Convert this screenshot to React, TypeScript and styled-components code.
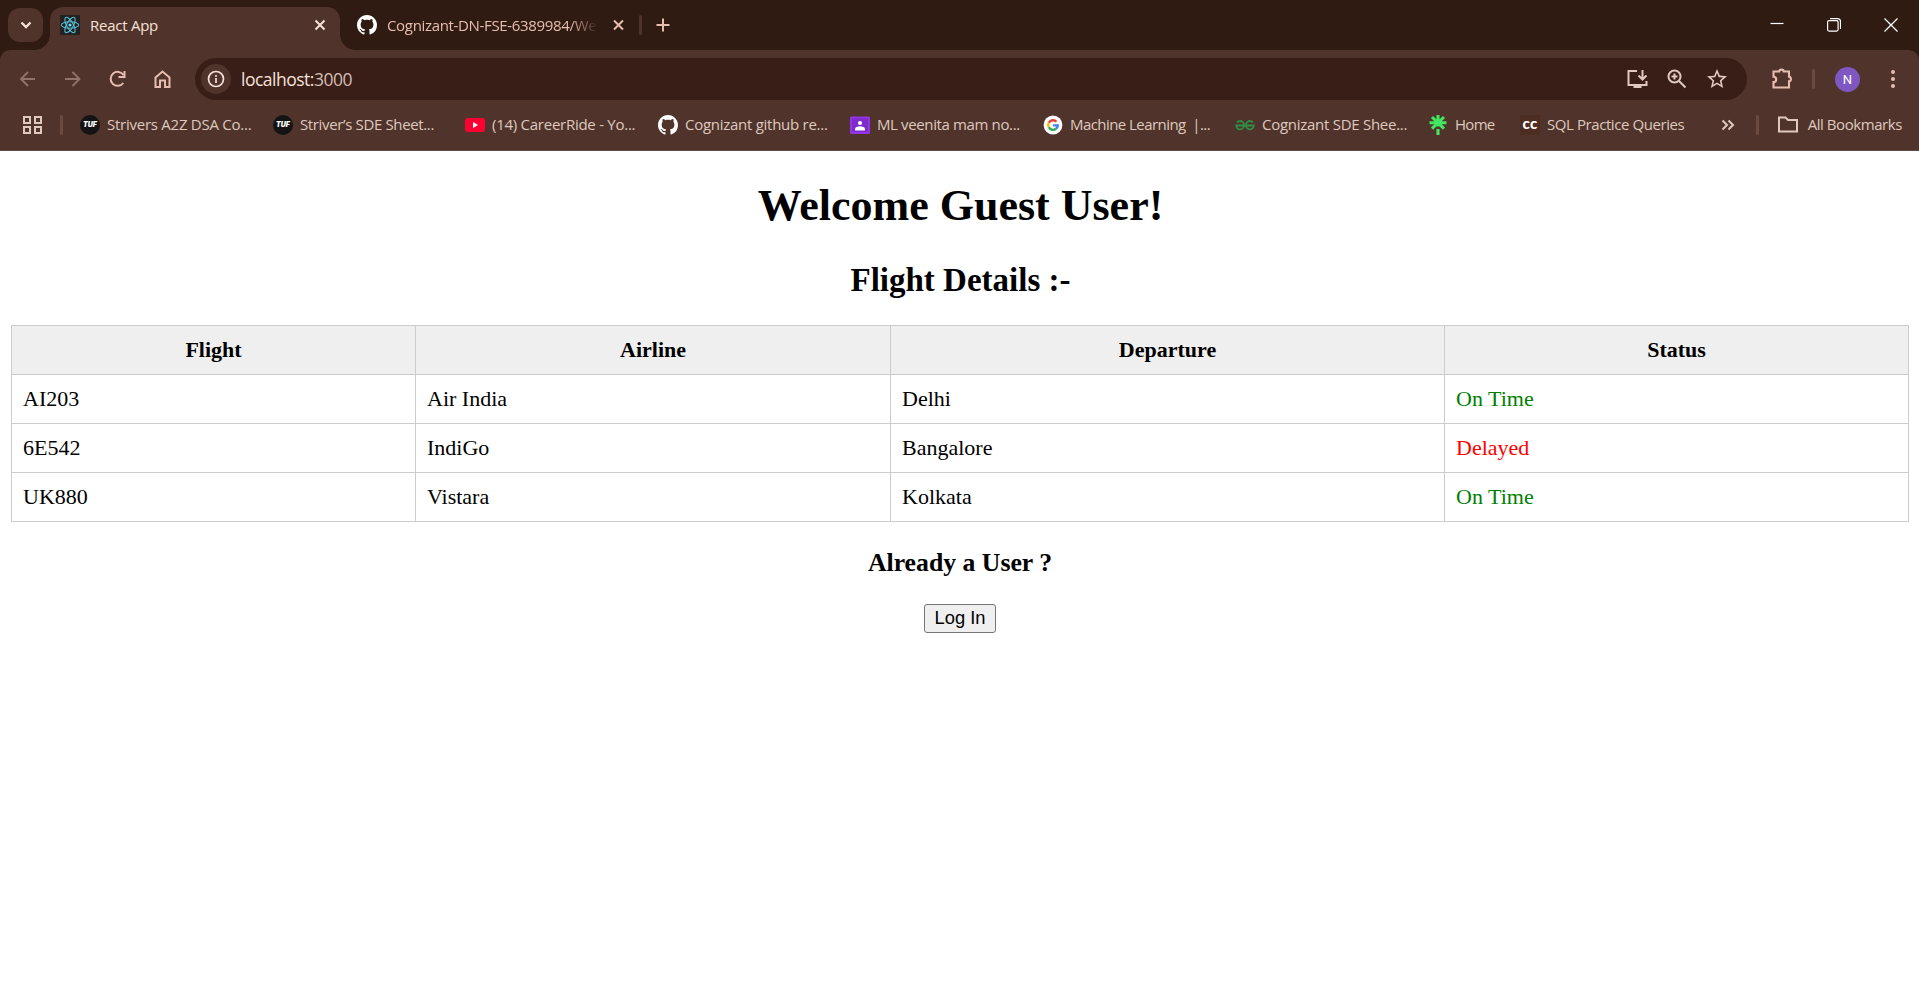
import React from 'react';
import styled, { createGlobalStyle } from 'styled-components';

const UI = '"Open Sans", "Noto Sans", sans-serif';

const GlobalStyle = createGlobalStyle`
  html, body { margin: 0; padding: 0; background: #fff; overflow: hidden; }
  svg { display: block; flex: none; }
`;

const Window = styled.div`
  display: flex;
  flex-direction: column;
  height: 1007px;
  background: #fff;
`;

/* ---------- tab strip ---------- */
const Frame = styled.header`
  background: #301b12;
  font-family: ${UI};
  font-size: 15px;
`;
const TabStrip = styled.div`
  display: flex;
  height: 50px;
  box-sizing: border-box;
  padding-left: 8px;
`;
const TabSearch = styled.button`
  width: 35px;
  height: 34px;
  margin: 8px 7px 0 0;
  padding: 0;
  border: 0;
  border-radius: 12px;
  background: #50342b;
  display: grid;
  place-items: center;
`;
const ActiveTab = styled.div`
  position: relative;
  display: flex;
  align-items: center;
  width: 290px;
  height: 43px;
  margin-top: 7px;
  box-sizing: border-box;
  padding: 0 8px 7px 10px;
  border-radius: 13px 13px 0 0;
  background: #50342b;
  color: #f6e1da;
  &::before, &::after {
    content: '';
    position: absolute;
    bottom: 0;
    width: 15px;
    height: 15px;
  }
  &::before { left: -15px; background: radial-gradient(circle at 0 0, transparent 14.5px, #50342b 15px); }
  &::after { right: -15px; background: radial-gradient(circle at 100% 0, transparent 14.5px, #50342b 15px); }
`;
const IdleTab = styled.div`
  display: flex;
  align-items: center;
  width: 286px;
  height: 50px;
  box-sizing: border-box;
  padding-left: 17px;
  color: #e7bdb0;
`;
const TabTitle = styled.span<{ $width: number; $spacing: number; $fade?: boolean }>`
  width: ${p => p.$width}px;
  margin-left: 10px;
  white-space: nowrap;
  line-height: 20px;
  letter-spacing: ${p => p.$spacing}px;
  ${p => p.$fade && 'mask-image: linear-gradient(90deg, #000 87%, transparent 101%);'}
`;
const Divider = styled.i<{ $gap?: string; $color?: string }>`
  flex: none;
  align-self: center;
  width: 3px;
  height: 20px;
  margin: ${p => p.$gap ?? '0'};
  border-radius: 2px;
  background: ${p => p.$color ?? '#6b4a40'};
`;
const NewTab = styled.span`
  display: flex;
  align-items: center;
`;
const WindowControls = styled.div`
  display: flex;
  gap: 43px;
  align-items: center;
  margin-left: auto;
  padding-right: 21px;
`;

/* ---------- toolbar ---------- */
const Toolbar = styled.div`
  display: flex;
  align-items: center;
  height: 58px;
  box-sizing: border-box;
  padding: 0 16px;
  background: #50342b;
  border-radius: 10px 10px 0 0;
`;
const NavButtons = styled.div`
  display: flex;
  gap: 21px;
  margin-right: 20px;
`;
const Omnibox = styled.div`
  flex: 1;
  display: flex;
  align-items: center;
  height: 42px;
  box-sizing: border-box;
  padding: 0 18px 0 6px;
  border-radius: 21px;
  background: #381e16;
`;
const SiteInfo = styled.span`
  display: grid;
  place-items: center;
  width: 30px;
  height: 30px;
  border-radius: 50%;
  background: #50342b;
`;
const Address = styled.span`
  flex: 1;
  margin-left: 10px;
  font-size: 17.5px;
  line-height: 24px;
  letter-spacing: -0.5px;
  color: #f6e1da;
`;
const Port = styled.span`
  color: #d3bcb4;
`;
const OmniActions = styled.div`
  display: flex;
  gap: 16px;
`;
const Extensions = styled.span`
  margin-left: 23px;
`;
const Avatar = styled.span`
  display: grid;
  place-items: center;
  width: 25px;
  height: 25px;
  margin-right: 23px;
  border-radius: 50%;
  background: #7e57c2;
  color: #fff;
  font-size: 13px;
  font-family: Roboto, sans-serif;
`;

/* ---------- bookmarks ---------- */
const BookmarkBar = styled.nav`
  display: flex;
  align-items: center;
  height: 43px;
  box-sizing: border-box;
  padding: 0 17px 9px 21px;
  background: #50342b;
  border-bottom: 1px solid #5d4b47;
  color: #dfc8bf;
`;
const Bookmark = styled.a<{ $width: number }>`
  display: flex;
  flex: none;
  align-items: center;
  gap: 7px;
  height: 20px;
  width: ${p => p.$width}px;
`;
const Label = styled.span<{ $spacing: number }>`
  padding-bottom: 2px;
  line-height: 20px;
  white-space: pre;
  letter-spacing: ${p => p.$spacing}px;
`;
const TufBadge = styled.span`
  display: grid;
  place-items: center;
  width: 20px;
  height: 20px;
  border-radius: 50%;
  background: #141414;
  color: #fff;
  font: italic 900 7px/20px Inter, sans-serif;
`;
const CcBadge = styled.span`
  display: grid;
  justify-items: center;
  align-items: start;
  width: 20px;
  height: 20px;
  background: #4c2d1f;
  color: #fff;
  font: 900 15px/16px Lato, sans-serif;
  letter-spacing: 0.3px;
`;
const AllBookmarks = styled.a`
  display: flex;
  align-items: center;
  height: 20px;
  margin-left: auto;
`;

/* ---------- page ---------- */
const Page = styled.main`
  flex: 1;
  padding: 0 11px;
  font-family: "Liberation Serif", "Times New Roman", serif;
  font-size: 22px;
  color: #000;
  text-align: center;
`;
const Welcome = styled.h1`
  margin: 30px 0;
  padding-left: 2px;
  font-size: 44px;
  line-height: 50px;
`;
const Subtitle = styled.h2`
  margin: 0 0 26px;
  padding-left: 2px;
  font-size: 33px;
  line-height: 38px;
`;
const Flights = styled.table`
  width: 100%;
  table-layout: fixed;
  border-collapse: collapse;
  text-align: left;
`;
const Cell = styled.td<{ $color?: string }>`
  height: 49px;
  box-sizing: border-box;
  padding: 0 11px;
  border: 1px solid #ccc;
  line-height: 26px;
  color: ${p => p.$color ?? '#000'};
`;
const HeadCell = styled.th<{ $width: number }>`
  width: ${p => p.$width}px;
  height: 49px;
  box-sizing: border-box;
  padding: 0 11px;
  border: 1px solid #ccc;
  background: #efefef;
  line-height: 26px;
  text-align: center;
`;
const Prompt = styled.h3`
  margin: 26px 0;
  padding-left: 1px;
  font-size: 25.74px;
  line-height: 30px;
`;
const LoginButton = styled.button`
  width: 72px;
  height: 29px;
  padding: 0 0 2px 1px;
  border: 1px solid #767676;
  border-radius: 3px;
  background: #efefef;
  color: #000;
  font: 18.33px/25px "Liberation Sans", Arial, sans-serif;
`;

/* ---------- icons ---------- */
type IconProps = { d: string; size?: number; w?: number; color?: string };
const Stroke = ({ d, size = 24, w = 2, color = '#e7bdb0' }: IconProps) => (
  <svg width={size} height={size} viewBox={`0 0 ${size} ${size}`} fill="none" stroke={color} strokeWidth={w}>
    <path d={d} />
  </svg>
);
const Material = ({ d, size = 24, color = '#dfc8bf' }: IconProps) => (
  <svg width={size} height={size} viewBox="0 0 24 24" fill={color}><path d={d} /></svg>
);
const GitHubMark = () => (
  <svg width="20" height="20" viewBox="0 0 16 16" fill="#fff">
    <path d="M8 0C3.58 0 0 3.58 0 8c0 3.54 2.29 6.53 5.47 7.59.4.07.55-.17.55-.38 0-.19-.01-.82-.01-1.49-2.01.37-2.53-.49-2.69-.94-.09-.23-.48-.94-.82-1.13-.28-.15-.68-.52-.01-.53.63-.01 1.08.58 1.23.82.72 1.21 1.87.87 2.33.66.07-.52.28-.87.51-1.07-1.78-.2-3.64-.89-3.64-3.95 0-.87.31-1.59.82-2.15-.08-.2-.36-1.02.08-2.12 0 0 .67-.21 2.2.82.64-.18 1.32-.27 2-.27s1.36.09 2 .27c1.53-1.04 2.2-.82 2.2-.82.44 1.1.16 1.92.08 2.12.51.56.82 1.27.82 2.15 0 3.07-1.87 3.75-3.65 3.95.29.25.54.73.54 1.48 0 1.07-.01 1.93-.01 2.2 0 .21.15.46.55.38A8.01 8.01 0 0 0 16 8c0-4.42-3.58-8-8-8z" />
  </svg>
);
const ReactLogo = () => (
  <svg width="20" height="20" viewBox="0 0 20 20" fill="none" stroke="#57b9d1" strokeWidth="1.1">
    <rect width="20" height="20" rx="1" fill="#222" stroke="none" />
    <ellipse cx="10" cy="10" rx="8.7" ry="3.3" />
    <ellipse cx="10" cy="10" rx="8.7" ry="3.3" transform="rotate(60 10 10)" />
    <ellipse cx="10" cy="10" rx="8.7" ry="3.3" transform="rotate(120 10 10)" />
    <circle cx="10" cy="10" r="1.6" fill="#61dafb" stroke="none" />
  </svg>
);
const YouTube = () => (
  <svg width="20" height="20" viewBox="0 0 20 20">
    <rect y="3" width="20" height="14" rx="3" fill="#ff0033" />
    <path d="M8 7l5 3-5 3z" fill="#fff" />
  </svg>
);
const Classroom = () => (
  <svg width="20" height="20" viewBox="0 0 20 20">
    <rect y="1.5" width="20" height="17.5" rx="1.5" fill="#9334e6" />
    <rect x="2" y="3.5" width="16" height="13.5" fill="#7f2bcb" />
    <circle cx="10" cy="8" r="2.1" fill="#fff" />
    <path d="M5 15.5v-1.4c0-1.8 2.6-2.8 5-2.8s5 1 5 2.8v1.4z" fill="#fff" />
  </svg>
);
const Google = () => (
  <svg width="20" height="20" viewBox="0 0 20 20" fill="none" strokeWidth="2.4">
    <circle cx="10" cy="10" r="9.4" fill="#fff" />
    <path d="M13.5 6.7A4.8 4.8 0 0 0 5.8 7.7" stroke="#ea4335" />
    <path d="M5.8 7.7a4.8 4.8 0 0 0 0 4.6" stroke="#fbbc04" />
    <path d="M5.8 12.3a4.8 4.8 0 0 0 7.2 1.5" stroke="#34a853" />
    <path d="M13 13.8a4.8 4.8 0 0 0 1.8-3.4H10" stroke="#4285f4" />
  </svg>
);
const Geeks = () => (
  <svg width="20" height="20" viewBox="0 0 20 20" fill="none" stroke="#2f8d46" strokeWidth="1.8">
    <path d="M2 7.300C3 6.300 4 6 5 6a3.900 4.200 0 1 1-3.800 4.500H18.800A3.900 4.200 0 1 1 15 6c1 0 2 .3 3 1.300" />
  </svg>
);
const Linktree = () => (
  <svg width="20" height="20" viewBox="0 0 20 20" stroke="#43e660" strokeWidth="3.1">
    <path d="M10 0v11.500M1.500 7.800h17M4 2l12 11.600M16 2L4 13.600M10 14v6" />
  </svg>
);

const bookmarks = [
  { icon: <TufBadge>TUF</TufBadge>, label: 'Strivers A2Z DSA Co...', width: 193, spacing: -0.25 },
  { icon: <TufBadge>TUF</TufBadge>, label: 'Striver’s SDE Sheet...', width: 192, spacing: -0.36 },
  { icon: <YouTube />, label: '(14) CareerRide - Yo...', width: 193, spacing: -0.26 },
  { icon: <GitHubMark />, label: 'Cognizant github re...', width: 192, spacing: -0.27 },
  { icon: <Classroom />, label: 'ML veenita mam no...', width: 193, spacing: -0.37 },
  { icon: <Google />, label: 'Machine Learning  |...', width: 192, spacing: -0.56 },
  { icon: <Geeks />, label: 'Cognizant SDE Shee...', width: 193, spacing: -0.27 },
  { icon: <Linktree />, label: 'Home', width: 92, spacing: -0.7 },
  { icon: <CcBadge>cc</CcBadge>, label: 'SQL Practice Queries', width: 170, spacing: -0.42 },
];

const columns = [
  { title: 'Flight', width: 404 },
  { title: 'Airline', width: 475 },
  { title: 'Departure', width: 554 },
  { title: 'Status', width: 464 },
];
const flights = [
  { code: 'AI203', airline: 'Air India', from: 'Delhi', status: 'On Time' },
  { code: '6E542', airline: 'IndiGo', from: 'Bangalore', status: 'Delayed' },
  { code: 'UK880', airline: 'Vistara', from: 'Kolkata', status: 'On Time' },
];

function BrowserChrome() {
  return (
    <Frame>
      <TabStrip>
        <TabSearch><Stroke size={14} w={2.3} color="#f6e1da" d="M2.5 4.500l4.500 4.500 4.500-4.500" /></TabSearch>
        <ActiveTab>
          <ReactLogo />
          <TabTitle $width={218} $spacing={-0.25}>React App</TabTitle>
          <Stroke size={24} color="#f6e1da" d="M7.500 7.500l9 9M16.500 7.500l-9 9" />
        </ActiveTab>
        <IdleTab>
          <GitHubMark />
          <TabTitle $width={210} $spacing={-0.33} $fade>Cognizant-DN-FSE-6389984/We</TabTitle>
          <Stroke size={36} d="M18 13.500l9 9M27 13.500l-9 9" />
        </IdleTab>
        <Divider $gap="0 8px 0 13px" $color="#50342b" />
        <NewTab><Stroke size={26} d="M13 6.500v13M6.500 13h13" /></NewTab>
        <WindowControls>
          <Stroke size={14} w={1.2} color="#fff" d="M.5 5.500h13" />
          <svg width="14" height="14" viewBox="0 0 14 14" fill="none" stroke="#fff" strokeWidth="1.2">
            <rect x=".6" y="2.6" width="10.5" height="10.5" rx="1.5" />
            <path d="M3 .6h7.500a3 3 0 0 1 3 3V11" />
          </svg>
          <Stroke size={14} w={1.3} color="#fff" d="M.5.5l13 13M13.5.5l-13 13" />
        </WindowControls>
      </TabStrip>
      <Toolbar>
        <NavButtons>
          <Stroke color="#92736a" w={1.8} d="M19 12H5.500M12 5l-7 7 7 7" />
          <Stroke color="#92736a" w={1.8} d="M4 12h14M11.500 5l7 7-7 7" />
          <Stroke d="M17.300 16A7 7 0 1 1 17.500 8M18.500 4v6h-6" />
          <Stroke d="M4.500 10.500L11.500 4.500l7 6V20h-4.500v-6.500h-5V20H4.500z" />
        </NavButtons>
        <Omnibox>
          <SiteInfo>
            <svg width="18" height="18" viewBox="0 0 18 18" fill="none" stroke="#f6e1da" strokeWidth="1.7">
              <circle cx="9" cy="9" r="7.5" /><path d="M9 8v5M9 5v1.700" />
            </svg>
          </SiteInfo>
          <Address>localhost:<Port>3000</Port></Address>
          <OmniActions>
            <Stroke color="#dfc8bf" d="M12 4H3.500V18H21.500V14M8.500 20h8M17.500 3v9M13.500 8.500l4 4 4-4" />
            <svg width="24" height="24" viewBox="0 0 24 24" fill="none" stroke="#dfc8bf" strokeWidth="2">
              <circle cx="9.5" cy="9.5" r="6" /><path d="M14 14l6.500 6.500M9.500 6.500v6M6.500 9.500h6" />
            </svg>
            <Material d="M22 9.240l-7.190-.62L12 2 9.190 8.630 2 9.240l5.460 4.730L5.820 21 12 17.270 18.180 21l-1.630-7.030L22 9.240zM12 15.400l-3.760 2.270 1-4.280-3.320-2.880 4.380-.38L12 6.100l1.710 4.040 4.380.38-3.320 2.880 1 4.280L12 15.400z" />
          </OmniActions>
        </Omnibox>
        <Extensions>
          <Stroke w={2.1} d="M3.500 4.500h5.700a2.300 1.900 0 0 1 4.600 0H19V9.800a1.900 2.300 0 0 1 0 4.600V20.500H3.500V15a2.700 2.600 0 0 0 0-5.200z" />
        </Extensions>
        <Divider $gap="0 20px 0 18px" />
        <Avatar>N</Avatar>
        <svg width="20" height="22" viewBox="0 0 20 22" fill="#e7bdb0">
          <circle cx="10" cy="4" r="2" /><circle cx="10" cy="11" r="2" /><circle cx="10" cy="18" r="2" />
        </svg>
      </Toolbar>
      <BookmarkBar>
        <Stroke size={22} color="#dfc8bf" d="M3 3h6v6H3zM14 3h6v6h-6zM3 13h6v6H3zM14 13h6v6h-6z" />
        <Divider $gap="0 17px" />
        {bookmarks.map(b => (
          <Bookmark key={b.label} $width={b.width}>
            {b.icon}
            <Label $spacing={b.spacing}>{b.label}</Label>
          </Bookmark>
        ))}
        <AllBookmarks>
          <Stroke size={14} color="#dfc8bf" d="M1.500 2.500l4.500 4.500-4.500 4.500M7.500 2.500l4.500 4.500-4.500 4.500" />
          <Divider $gap="0 18px 0 21px" />
          <Stroke size={31} color="#dfc8bf" d="M2 8.500h6.500l2.500 2.500h9V22.500H2z" />
          <Label $spacing={-0.43}>All Bookmarks</Label>
        </AllBookmarks>
      </BookmarkBar>
    </Frame>
  );
}

function FlightTable() {
  return (
    <Flights>
      <thead>
        <tr>{columns.map(c => <HeadCell key={c.title} $width={c.width}>{c.title}</HeadCell>)}</tr>
      </thead>
      <tbody>
        {flights.map(f => (
          <tr key={f.code}>
            <Cell>{f.code}</Cell>
            <Cell>{f.airline}</Cell>
            <Cell>{f.from}</Cell>
            <Cell $color={f.status === 'Delayed' ? 'red' : 'green'}>{f.status}</Cell>
          </tr>
        ))}
      </tbody>
    </Flights>
  );
}

export default function App() {
  return (
    <Window>
      <GlobalStyle />
      <BrowserChrome />
      <Page>
        <Welcome>Welcome Guest User!</Welcome>
        <Subtitle>Flight Details :-</Subtitle>
        <FlightTable />
        <Prompt>Already a User ?</Prompt>
        <LoginButton>Log In</LoginButton>
      </Page>
    </Window>
  );
}
